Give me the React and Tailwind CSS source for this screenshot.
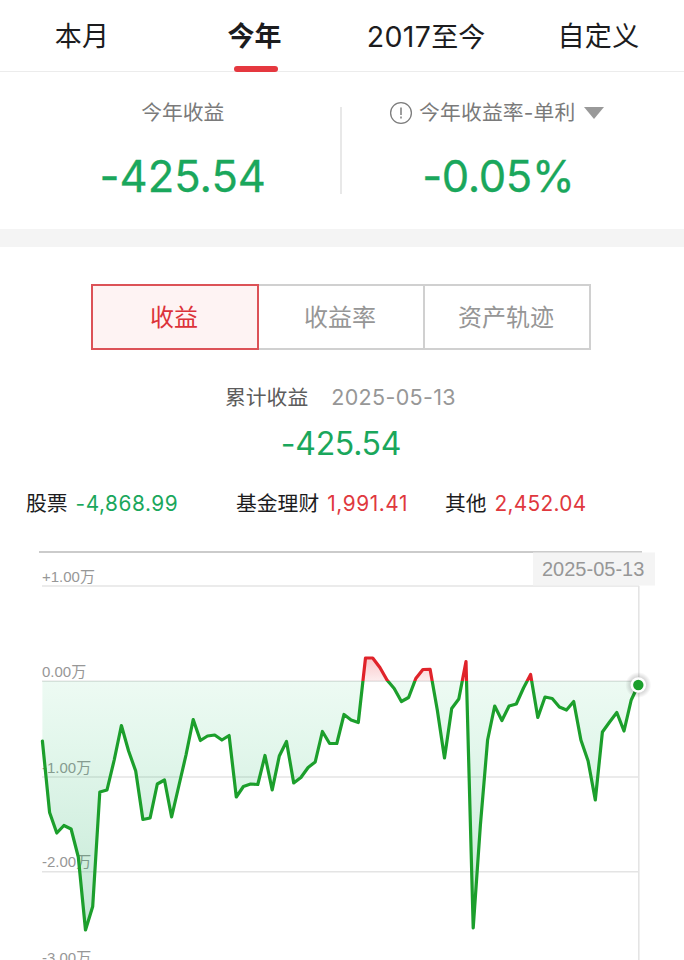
const TABS = [
  { label: "本月", className: "pr-[7px] tracking-[0.3px]" },
  { label: "今年", className: "pr-[4px] font-bold", active: true },
  { digits: "2017", label: "至今", className: "pr-[3px]" },
  { label: "自定义", className: "tracking-[0.3px]" },
];

const MODES = [
  { label: "收益", active: true },
  { label: "收益率" },
  { label: "资产轨迹" },
];

const GRID = [
  { y: 586, label: "+1.00万" },
  { y: 681.2, label: "0.00万" },
  { y: 777, label: "-1.00万" },
  { y: 871.8, label: "-2.00万" },
  { y: 967.5, label: "-3.00万" },
];

const ZERO_Y = 681;
const START_X = 42.4;
const STEP_X = 7.18;

const SERIES = [
  741, 812.5, 833, 825.5, 829, 857, 930, 906.5, 792, 790, 760, 725.5, 751, 771,
  819.5, 818, 784, 780, 817, 786, 755, 719.5, 740.5, 736, 735, 740, 735.5, 797,
  786.5, 784, 784.5, 755.5, 790, 756, 741.5, 783, 777.5, 767.5, 762, 731.5,
  743.5, 743.5, 714.5, 720, 722.5, 658, 658, 667.5, 680, 688.5, 701.5, 697.5,
  678.5, 669.5, 669.3, 710, 758, 708.5, 699, 661.5, 928, 825, 740, 706, 720.5,
  706, 704, 688, 674.5, 717.5, 697, 698.5, 707, 710, 701.5, 740, 761, 800, 732,
  722, 712.5, 731, 700, 685,
];

const linePoints = SERIES.map(
  (y, index) => `${(START_X + index * STEP_X).toFixed(1)},${y}`,
).join(" ");
const areaPoints = `${START_X},${ZERO_Y} ${linePoints} 638.3,${ZERO_Y}`;

function TabBar() {
  return (
    <div className="flex h-[72px] border-b border-[#ececec] text-[27px] text-[#1c1c1e]">
      {TABS.map((tab) => (
        <div
          key={tab.label}
          className="relative flex flex-1 justify-center whitespace-nowrap"
        >
          <span className={`leading-[74px] ${tab.className}`}>
            {tab.digits ? (
              <span className="text-[28.5px] tracking-[0.3px]">{tab.digits}</span>
            ) : null}
            {tab.label}
          </span>
          {tab.active ? (
            <span className="absolute -bottom-px left-[63px] h-1.5 w-11 rounded-full bg-[#e5383f]" />
          ) : null}
        </div>
      ))}
    </div>
  );
}

function InfoIcon() {
  return (
    <svg
      className="mb-px"
      width="24"
      height="24"
      viewBox="0 0 24 24"
      fill="none"
      stroke="#7d7d7d"
    >
      <circle cx="12" cy="12" r="10.4" strokeWidth="1.3" />
      <path d="M12 6.5v7.6M12 15.6v1.8" strokeWidth="1.5" />
    </svg>
  );
}

function Summary() {
  return (
    <div className="flex h-[157px] items-start pl-[26px] pr-[29px] pt-[26px] text-[#7a7a7a]">
      <div className="flex flex-1 flex-col items-center">
        <div className="h-[30px] text-[20.8px] leading-[30px]">今年收益</div>
        <div className="mt-[18px] text-[43.5px] font-normal leading-[60px] [-webkit-text-stroke:0.3px_#1aa75c] text-[#1aa75c]">
          -425.54
        </div>
      </div>
      <div className="mt-[9px] h-[87px] w-[2px] bg-[#e8e8e8]" />
      <div className="flex flex-1 flex-col items-center">
        <div className="flex h-[30px] items-center whitespace-nowrap pr-[3px] text-[20.8px] leading-[30px]">
          <InfoIcon />
          <span className="ml-[6px] tracking-[0.15px]">今年收益率-单利</span>
          <svg className="ml-[9px]" width="20" height="12" viewBox="0 0 20 12">
            <path d="M0 0h20L10 12z" fill="#999" />
          </svg>
        </div>
        <div className="mt-[18px] text-[43.5px] font-normal leading-[60px] tracking-[-0.4px] [-webkit-text-stroke:0.3px_#1aa75c] text-[#1aa75c]">
          -0.05%
        </div>
      </div>
    </div>
  );
}

function ModeSwitch() {
  return (
    <div className="ml-[91px] mt-[37px] flex h-[66px] w-[500px] text-2xl">
      {MODES.map((mode) => (
        <div
          key={mode.label}
          className={
            mode.active
              ? "flex w-[168px] items-center justify-center border-2 border-[#dc5257] bg-[#fef3f3] pr-0.5 pt-0.5 text-[#dc3239]"
              : "flex flex-1 items-center justify-center border-2 border-l-0 border-[#d0d0d0] pr-0.5 pt-0.5 text-[#969696]"
          }
        >
          {mode.label}
        </div>
      ))}
    </div>
  );
}

function Breakdown() {
  return (
    <div className="mt-[23px] flex h-[32px] items-center whitespace-nowrap pl-[26px] text-[20.8px] leading-[32px] text-[#1c1c1e]">
      <div className="flex w-[210px] gap-[8px]">
        <span>股票</span>
        <span className="tracking-[0.55px] text-[#1aa75c]">-4,868.99</span>
      </div>
      <div className="flex w-[209px] gap-[8px]">
        <span>基金理财</span>
        <span className="tracking-[0.6px] text-[#e0383e]">1,991.41</span>
      </div>
      <div className="flex gap-[8px]">
        <span>其他</span>
        <span className="tracking-[0.3px] text-[#e0383e]">2,452.04</span>
      </div>
    </div>
  );
}

function ProfitChart() {
  return (
    <svg
      className="mt-[30px] block"
      width="684"
      height="410"
      viewBox="0 550 684 410"
    >
      <defs>
        <linearGradient id="loss" gradientUnits="userSpaceOnUse" x1="0" y1="681" x2="0" y2="930">
          <stop offset="0" stopColor="#1fc46a" stopOpacity="0.08" />
          <stop offset="1" stopColor="#12a055" stopOpacity="0.25" />
        </linearGradient>
        <linearGradient id="gain" gradientUnits="userSpaceOnUse" x1="0" y1="658" x2="0" y2="681">
          <stop offset="0" stopColor="#e8232b" stopOpacity="0.25" />
          <stop offset="1" stopColor="#e8232b" stopOpacity="0.08" />
        </linearGradient>
        <radialGradient id="halo">
          <stop offset="0.5" stopColor="#000" stopOpacity="0.2" />
          <stop offset="1" stopColor="#000" stopOpacity="0" />
        </radialGradient>
        <clipPath id="above">
          <rect x="0" y="550" width="684" height="131" />
        </clipPath>
        <clipPath id="below">
          <rect x="0" y="681" width="684" height="279" />
        </clipPath>
      </defs>

      <path d="M39 552H642" stroke="#cbcbcb" strokeWidth="2" />
      <path d="M638.8 586V960" stroke="#e4e4e4" strokeWidth="1.6" />
      {GRID.map((row) => (
        <g key={row.label}>
          <path d={`M42 ${row.y}H639`} stroke="#e4e4e4" strokeWidth="1.6" />
          <text
            x="42"
            y={row.y - 4.5}
            fontSize="15"
            fill="#979797"
            className="font-['Liberation_Sans','Noto_Sans_CJK_SC',sans-serif]"
          >
            {row.label}
          </text>
        </g>
      ))}

      <rect x="533" y="552.5" width="122" height="33" fill="#f4f4f4" />
      <text
        x="542"
        y="576"
        fontSize="20"
        fill="#979797"
        className="font-['Liberation_Sans',sans-serif]"
      >
        2025-05-13
      </text>

      <g clipPath="url(#below)">
        <polygon points={areaPoints} fill="url(#loss)" />
        <polyline
          points={linePoints}
          fill="none"
          stroke="#1c9f2c"
          strokeWidth="3.2"
          strokeLinejoin="round"
          strokeLinecap="round"
        />
      </g>
      <g clipPath="url(#above)">
        <polygon points={areaPoints} fill="url(#gain)" />
        <polyline
          points={linePoints}
          fill="none"
          stroke="#e0232a"
          strokeWidth="3.2"
          strokeLinejoin="round"
        />
      </g>

      <circle cx="638.3" cy="685" r="13" fill="url(#halo)" />
      <circle cx="638.3" cy="685" r="7.8" fill="#fff" />
      <circle cx="638.3" cy="685" r="5.2" fill="#1c9f2c" />
    </svg>
  );
}

export default function App() {
  return (
    <div className="h-[960px] w-[684px] overflow-hidden bg-white font-['Inter','Noto_Sans_CJK_SC',sans-serif] [font-feature-settings:'calt'_0]">
      <TabBar />
      <Summary />
      <div className="h-[18px] bg-[#f4f4f4]" />
      <ModeSwitch />
      <div className="mt-[33px] flex h-[30px] items-center justify-center pr-[3px] text-[20.8px] leading-[30px]">
        <span className="text-[#5c5c5c]">累计收益</span>
        <span className="ml-[23px] pb-0.5 text-[21.5px] tracking-[0.35px] text-[#979797]">
          2025-05-13
        </span>
      </div>
      <div className="mt-[10px] h-[42px] pr-[2px] text-center text-[32px] leading-[42px] tracking-[-0.3px] text-[#1aa75c]">
        -425.54
      </div>
      <Breakdown />
      <ProfitChart />
    </div>
  );
}
